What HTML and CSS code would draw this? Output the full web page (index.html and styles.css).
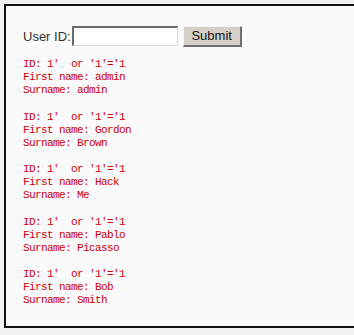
FILE: index.html
```html
<!DOCTYPE html>
<html>
<head>
<meta charset="utf-8">
<link rel="stylesheet" href="styles.css">
</head>
<body>
<div class="box">
  <form class="row">
    <label class="label">User ID:</label>
    <input class="field" type="text">
    <button class="btn" type="button">Submit</button>
  </form>
  <pre class="res">ID: 1'  or '1'='1
First name: admin
Surname: admin</pre>
  <pre class="res">ID: 1'  or '1'='1
First name: Gordon
Surname: Brown</pre>
  <pre class="res">ID: 1'  or '1'='1
First name: Hack
Surname: Me</pre>
  <pre class="res">ID: 1'  or '1'='1
First name: Pablo
Surname: Picasso</pre>
  <pre class="res">ID: 1'  or '1'='1
First name: Bob
Surname: Smith</pre>
</div>
</body>
</html>
```
FILE: styles.css
```css
html, body {
  margin: 0;
  background: #f1f1f1;
}
body {
  padding: 4px 0 0 4px;
  overflow: hidden;
  height: 335px;
  box-sizing: border-box;
}
.box {
  width: 360px;
  height: 324px;
  box-sizing: border-box;
  border: 2px solid #111;
  background: #fafafa;
  padding: 19px 0 0 17px;
}
.row {
  display: flex;
  align-items: center;
  margin: 0;
  height: 22px;
}
.label {
  font-family: "Liberation Sans", Arial, sans-serif;
  font-size: 13px;
  color: #333;
  margin-right: 1px;
}
.field {
  width: 106px;
  height: 20px;
  box-sizing: border-box;
  margin: 0;
  padding: 0;
  background: #fff;
  border-style: solid;
  border-width: 2px 1px 1px 2px;
  border-color: #6b6b6b #dcdcdc #dcdcdc #6b6b6b;
}
.btn {
  margin: 0 0 0 5px;
  width: 59px;
  height: 21px;
  box-sizing: border-box;
  padding: 0;
  background: #d4d0c8;
  border-style: solid;
  border-width: 1px 2px 2px 1px;
  border-color: #f4f4f4 #6e6e6e #6e6e6e #f4f4f4;
  font-family: "Liberation Sans", Arial, sans-serif;
  font-size: 13px;
  color: #111;
}
.res {
  margin: 11px 0 0 0;
  font-family: "Liberation Mono", monospace;
  font-size: 11px;
  letter-spacing: -0.6px;
  line-height: 13px;
  color: #c00;
}
.res + .res {
  margin-top: 13.5px;
}
```
